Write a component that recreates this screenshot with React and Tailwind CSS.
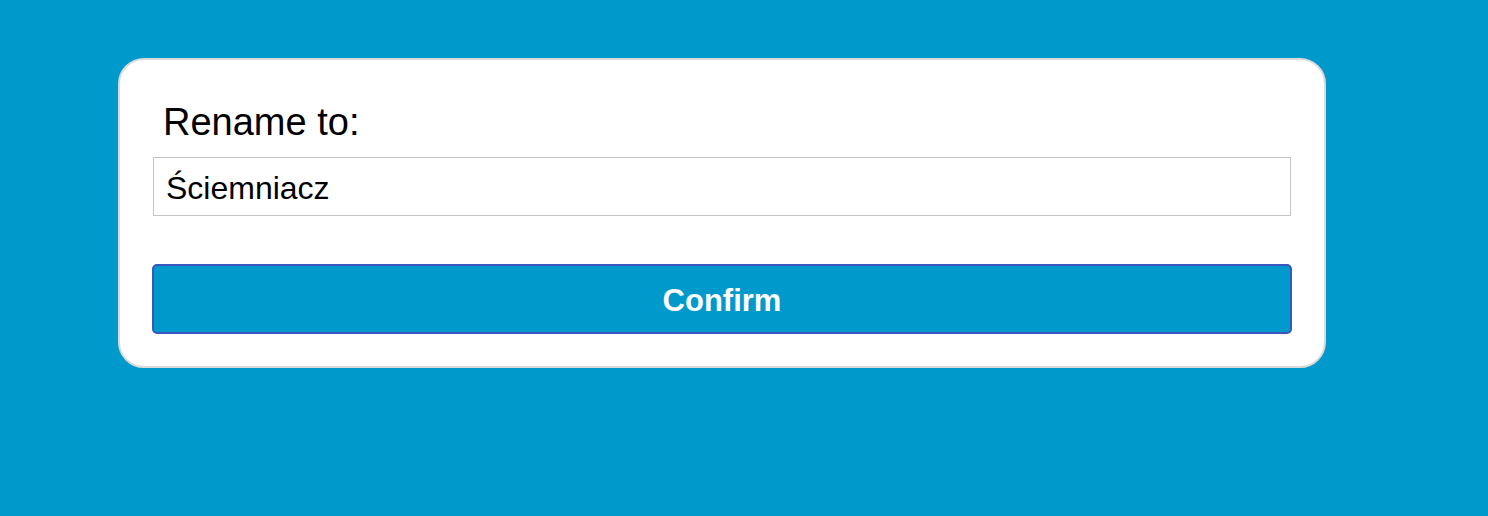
export default function App() {
  return (
    <div className="w-[1488px] h-[516px] bg-[#0099cc] pt-[58px] pl-[118px]" style={{ fontFamily: '"Liberation Sans", Arial, sans-serif' }}>
      <div className="w-[1208px] h-[310px] bg-white border-2 border-[#dadada] rounded-[26px] px-[33px] pt-[41px] flex flex-col">
        <div className="text-[38px] leading-[42px] text-black pl-[10px]">Rename to:</div>
        <div className="mt-[14px] h-[59px] border border-[#c4c4c4] flex items-center pl-[12px] pt-[3px] text-[32px] text-black">
          Ściemniacz
        </div>
        <button className="mt-[48px] -mx-px h-[70px] bg-[#0099cc] border-2 border-[#3a56bf] rounded-[5px] text-white font-bold text-[31px] flex items-center justify-center pt-[5px]">
          Confirm
        </button>
      </div>
    </div>
  );
}
